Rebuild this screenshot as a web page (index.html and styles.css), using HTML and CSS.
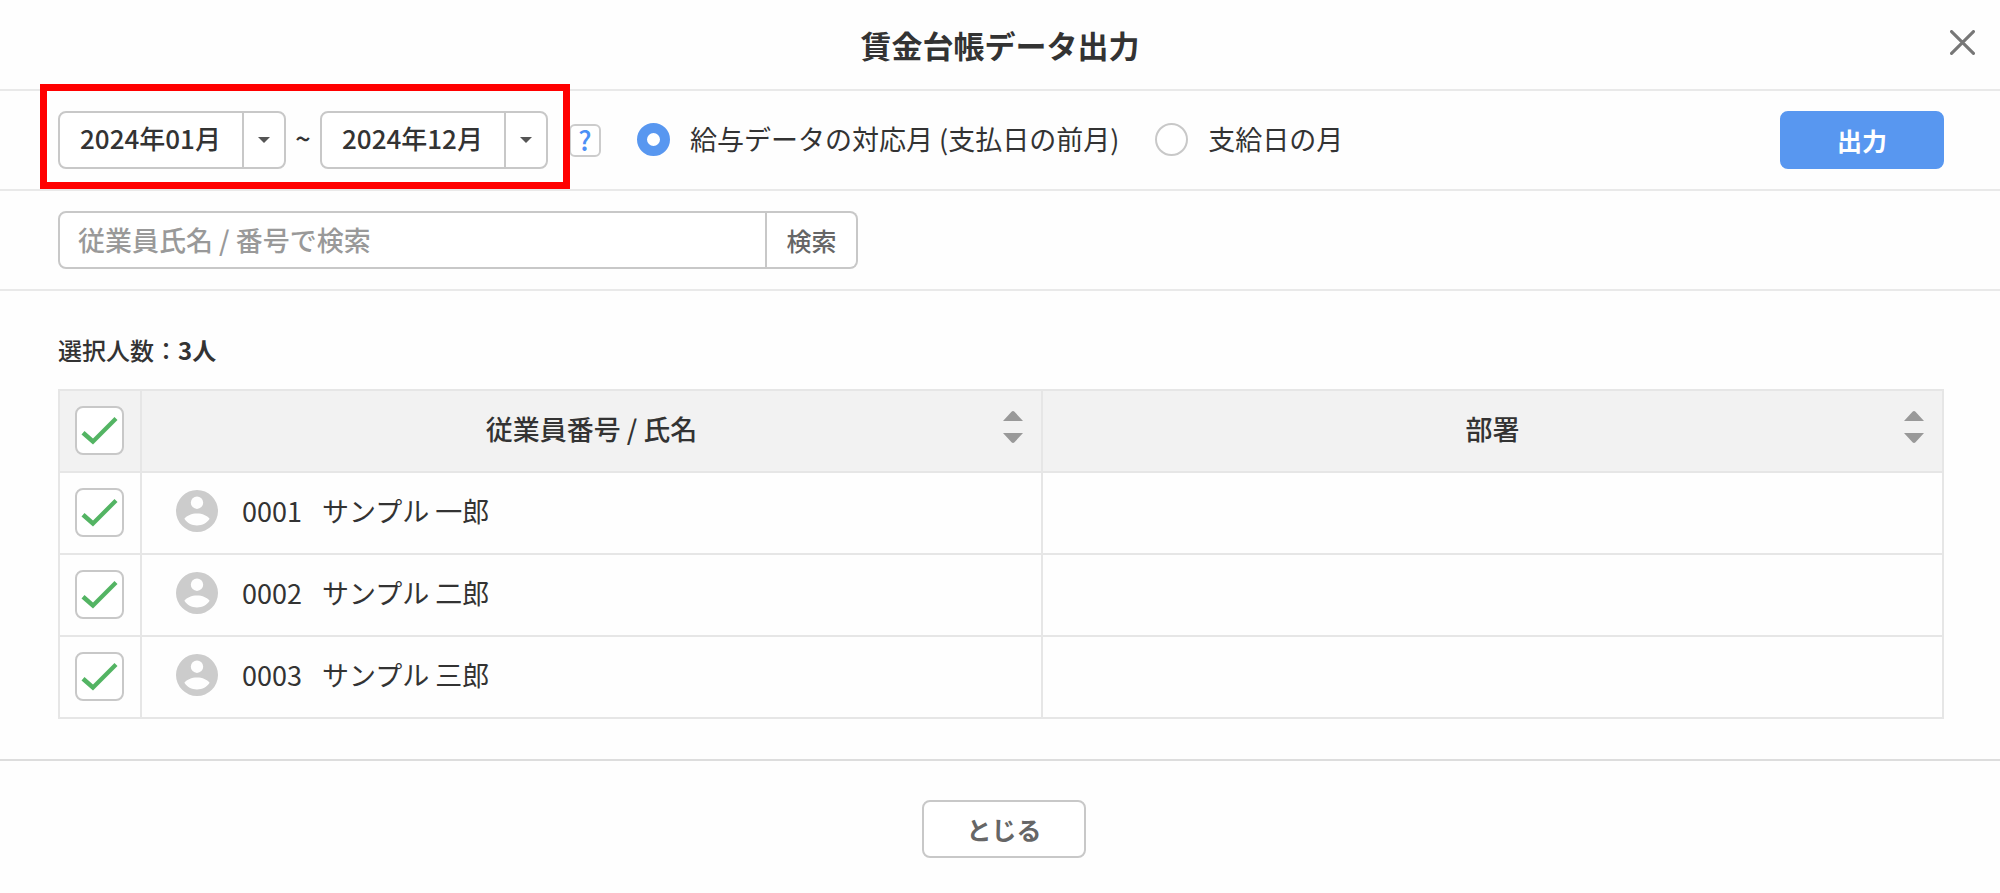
FILE: index.html
```html
<!DOCTYPE html>
<html lang="ja">
<head>
<meta charset="utf-8">
<meta name="viewport" content="width=device-width, initial-scale=1">
<title>賃金台帳データ出力</title>
<link rel="stylesheet" href="styles.css">
</head>
<body>
<svg class="defs" aria-hidden="true">
  <symbol id="avatar" viewBox="0 0 42 42"><path fill-rule="evenodd" d="M21 0a21 21 0 1 0 0 42a21 21 0 0 0 0-42zM21 6.500a6.200 6.200 0 1 1 0 12.400a6.200 6.200 0 0 1 0-12.400zM21 23.500c5.500 0 10 2 12.600 5.300c-2.600 4.200-7.200 6.700-12.600 6.700s-10-2.500-12.600-6.700c2.600-3.300 7.100-5.300 12.600-5.300z"/></symbol>
  <symbol id="sort" viewBox="0 0 20 32"><path d="M0 10L8.500 .8Q10-.6 11.500 .8L20 10zM0 22h20l-8.500 9.200q-1.500 1.400-3 0z"/></symbol>
</svg>
<main class="dialog">
  <header class="dialog-header">
    <h1 class="title">賃金台帳データ出力</h1>
    <button class="close-icon" type="button" aria-label="閉じる"><svg viewBox="0 0 24 24"><path d="M1.500 1.500l21 21M22.500 1.500l-21 21"/></svg></button>
  </header>
  <section class="bar">
    <div class="range">
      <div class="picker">
        <select class="picker-select" aria-label="開始月"><option>2024年01月</option></select>
        <span class="picker-arrow"></span>
      </div>
      <span class="tilde">~</span>
      <div class="picker">
        <select class="picker-select" aria-label="終了月"><option>2024年12月</option></select>
        <span class="picker-arrow"></span>
      </div>
    </div>
    <button class="help" type="button">?</button>
    <label class="choice"><input class="radio" type="radio" name="basis" checked>給与データの対応月 (支払日の前月)</label>
    <label class="choice"><input class="radio" type="radio" name="basis">支給日の月</label>
    <button class="button button-primary" type="button">出力</button>
  </section>
  <section class="bar">
    <form class="search">
      <input class="search-input" type="text" aria-label="従業員検索" placeholder="従業員氏名 / 番号で検索">
      <button class="search-button" type="button">検索</button>
    </form>
  </section>
  <section class="content">
    <p class="count">選択人数：<b>3人</b></p>
    <table class="table">
      <colgroup><col class="col-check"><col><col></colgroup>
      <thead>
        <tr>
          <th class="cell-check"><input class="check" type="checkbox" aria-label="すべて選択" checked></th>
          <th><div class="heading">従業員番号 / 氏名<svg class="sort"><use href="#sort"/></svg></div></th>
          <th><div class="heading">部署<svg class="sort"><use href="#sort"/></svg></div></th>
        </tr>
      </thead>
      <tbody>
        <tr>
          <td class="cell-check"><input class="check" type="checkbox" aria-label="0001を選択" checked></td>
          <td><div class="person"><svg class="avatar"><use href="#avatar"/></svg><span class="number">0001</span><span class="name">サンプル 一郎</span></div></td>
          <td></td>
        </tr>
        <tr>
          <td class="cell-check"><input class="check" type="checkbox" aria-label="0002を選択" checked></td>
          <td><div class="person"><svg class="avatar"><use href="#avatar"/></svg><span class="number">0002</span><span class="name">サンプル 二郎</span></div></td>
          <td></td>
        </tr>
        <tr>
          <td class="cell-check"><input class="check" type="checkbox" aria-label="0003を選択" checked></td>
          <td><div class="person"><svg class="avatar"><use href="#avatar"/></svg><span class="number">0003</span><span class="name">サンプル 三郎</span></div></td>
          <td></td>
        </tr>
      </tbody>
    </table>
  </section>
  <footer class="dialog-footer">
    <button class="button" type="button">とじる</button>
  </footer>
</main>
</body>
</html>
```
FILE: styles.css
```css
* { box-sizing: border-box; }

body {
  margin: 0;
  background: #fefefe;
  color: #333;
  font-family: "Noto Sans CJK JP", sans-serif;
  font-size: 27px;
  line-height: 40px;
}

button, input, select { margin: 0; font: inherit; color: inherit; }
button { padding: 0; cursor: pointer; }

.defs { display: none; }

.dialog-header {
  display: flex;
  align-items: center;
  justify-content: center;
  position: relative;
  height: 91px;
  border-bottom: 2px solid #e9e9e9;
}

.title { margin: 0; font-size: 31px; font-weight: 700; }

.close-icon {
  position: absolute;
  top: 30px;
  right: 25px;
  width: 25px;
  height: 25px;
  border: 0;
  background: none;
}
.close-icon svg { display: block; width: 100%; height: 100%; }
.close-icon path { fill: none; stroke: #777; stroke-width: 3; stroke-linecap: round; }

.bar {
  display: flex;
  align-items: center;
  padding: 20px 56px 20px 58px;
  border-bottom: 2px solid #e9e9e9;
}

/* Date range with its red outline */
.range { display: flex; align-items: center; position: relative; }
.range::after {
  content: "";
  position: absolute;
  inset: -27px -22px -20px -18px;
  border: 7px solid #f00;
  pointer-events: none;
}

.picker { position: relative; }
.picker-select {
  display: block;
  appearance: none;
  width: 228px;
  height: 58px;
  padding: 0 0 4px 20px;
  border: 2px solid #c8c8c8;
  border-radius: 8px;
  background: #fff;
  font-size: 26px;
  font-weight: 500;
}
.picker-arrow {
  display: flex;
  align-items: center;
  justify-content: center;
  position: absolute;
  top: 2px;
  right: 2px;
  bottom: 2px;
  width: 42px;
  border-left: 2px solid #c8c8c8;
  pointer-events: none;
}
.picker-arrow::before {
  content: "";
  border: 6px solid transparent;
  border-top-color: #555;
  border-bottom: 0;
}
.tilde { width: 34px; padding-bottom: 4px; font-weight: 500; text-align: center; }

.help {
  width: 32px;
  height: 33px;
  margin-left: 21px;
  border: 2px solid #ccc;
  border-radius: 6px;
  background: #fff;
  color: #4c8ff5;
  font-weight: 500;
  line-height: 28px;
}

.choice { display: flex; align-items: center; gap: 20px; margin-left: 36px; padding-bottom: 2px; }
.radio {
  appearance: none;
  width: 33px;
  height: 33px;
  border: 2px solid #c8c8c8;
  border-radius: 50%;
  background: #fff;
}
.radio:checked { border: 10px solid #5897f0; }

.button {
  width: 164px;
  height: 58px;
  border: 2px solid #c8c8c8;
  border-radius: 8px;
  background: #fff;
  color: #666;
  font-size: 25px;
  font-weight: 700;
}
.button-primary { margin-left: auto; border-color: #5897f0; background: #5897f0; color: #fff; }

.search { display: flex; width: 800px; }
.search-input {
  flex: 1;
  min-width: 0;
  height: 58px;
  padding: 0 18px 2px;
  border: 2px solid #c8c8c8;
  border-radius: 8px 0 0 8px;
  background: #fff;
}
.search-input::placeholder { color: #999; font-weight: 500; opacity: 1; }
.search-button {
  width: 91px;
  border: 2px solid #c8c8c8;
  border-left: 0;
  border-radius: 0 8px 8px 0;
  background: #fff;
  color: #666;
  font-size: 25px;
  font-weight: 500;
}

.content { padding: 39px 56px 40px 58px; border-bottom: 2px solid #ddd; }
.count { margin: 0 0 19px; font-size: 24px; font-weight: 500; }

.table { width: 100%; border-collapse: collapse; table-layout: fixed; }
.col-check { width: 82px; }
.table th, .table td { height: 82px; padding: 0 0 4px; border: 2px solid #e6e6e6; }
.table th { background: #f2f2f2; font-weight: 500; }
.table .cell-check { padding: 0 2px 2px 0; }

.check {
  appearance: none;
  display: block;
  width: 49px;
  height: 49px;
  margin: 0 auto;
  border: 2px solid #c8c8c8;
  border-radius: 8px;
  background: #fff;
  position: relative;
}
.check:checked::after {
  content: "";
  position: absolute;
  inset: 0;
  background: #53b463;
  clip-path: path("M5 27L8 23.500L16.500 31L38 9.500L41 12.500L16.500 37Z");
}

.heading { display: flex; align-items: center; justify-content: center; position: relative; }
.sort { position: absolute; top: 2px; right: 18px; width: 20px; height: 32px; fill: #999; }

.person { display: flex; align-items: center; padding-left: 34px; }
.avatar { width: 42px; height: 42px; margin-right: 24px; fill: #ccc; }
.number { margin-right: 20px; }

.dialog-footer { display: flex; justify-content: center; padding: 39px 0 36px 8px; }
```
